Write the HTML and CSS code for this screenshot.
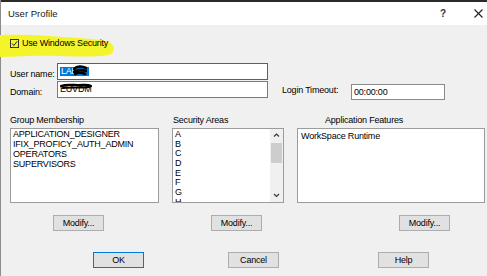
FILE: index.html
```html
<!DOCTYPE html>
<html>
<head>
<meta charset="utf-8">
<link rel="stylesheet" href="styles.css">
</head>
<body>
<div class="window">
  <div class="titlebar">
    <span class="title">User Profile</span>
    <span class="help">?</span>
    <svg class="close" viewBox="0 0 9 9"><path d="M0.5 0.5 L8.5 8.5 M8.5 0.5 L0.5 8.5" stroke="#222" stroke-width="1.1" fill="none"/></svg>
  </div>
  <div class="client">
    <svg class="highlight" viewBox="0 0 114 26"><path d="M0 3 C20 2 60 4 100 8 C112 9 115 14 113 20 C111 25 90 25 60 24 C30 23 10 25 0 25 Z" fill="#f4f42a"/></svg>
    <div class="check-row">
      <svg class="checkbox" viewBox="0 0 9 9"><rect x="0.5" y="0.5" width="8" height="8" fill="none" stroke="#333" stroke-width="1"/><path d="M2 4.5 L3.8 6.5 L7.2 2.3" stroke="#222" stroke-width="1" fill="none"/></svg>
      <span class="check-label">Use Windows Security</span>
    </div>

    <div class="fields">
      <span class="label lbl-user">User name:</span>
      <div class="input focused in-user">
        <span class="selected">LAB</span>
        <svg class="scribble scr-user" viewBox="0 0 14 12"><path d="M1 4 C4 1 9 1 13 3 M1 7 C5 4 10 5 13 6 M2 9 C6 7 10 8 12 9" stroke="#000" stroke-width="2.6" fill="none" stroke-linecap="round"/></svg>
      </div>
      <span class="label lbl-domain">Domain:</span>
      <div class="input in-domain">
        <span class="domain-text">EUVDM</span>
        <svg class="scribble scr-domain" viewBox="0 0 32 7"><path d="M1 3 C6 1 12 2 18 2 C24 2 28 1 31 3 M3 5 C10 4 20 5 29 4" stroke="#000" stroke-width="2.2" fill="none" stroke-linecap="round"/></svg>
      </div>
      <span class="label lbl-timeout">Login Timeout:</span>
      <div class="input timeout">00:00:00</div>
    </div>

    <div class="lists">
      <div class="col">
        <div class="col-label">Group Membership</div>
        <div class="listbox group">
          <div class="item">APPLICATION_DESIGNER</div>
          <div class="item">IFIX_PROFICY_AUTH_ADMIN</div>
          <div class="item">OPERATORS</div>
          <div class="item">SUPERVISORS</div>
        </div>
        <button class="btn modify m1">Modify...</button>
      </div>
      <div class="col">
        <div class="col-label l2">Security Areas</div>
        <div class="listbox areas">
          <div class="area-items">
            <div class="aitem">A</div>
            <div class="aitem">B</div>
            <div class="aitem">C</div>
            <div class="aitem">D</div>
            <div class="aitem">E</div>
            <div class="aitem">F</div>
            <div class="aitem">G</div>
            <div class="aitem">H</div>
          </div>
          <div class="scrollbar">
            <svg class="arrow" viewBox="0 0 13 13"><path d="M4 7.5 L6.5 5 L9 7.5" stroke="#333" stroke-width="1.1" fill="none"/></svg>
            <div class="thumb"></div>
            <div class="track"></div>
            <svg class="arrow" viewBox="0 0 13 13"><path d="M4 5 L6.5 7.5 L9 5" stroke="#333" stroke-width="1.1" fill="none"/></svg>
          </div>
        </div>
        <button class="btn modify m2">Modify...</button>
      </div>
      <div class="col">
        <div class="col-label l3">Application Features</div>
        <div class="listbox features">
          <div class="item">WorkSpace Runtime</div>
        </div>
        <button class="btn modify m3">Modify...</button>
      </div>
    </div>

    <div class="actions">
      <button class="btn ok">OK</button>
      <button class="btn cancel">Cancel</button>
      <button class="btn helpbtn">Help</button>
    </div>
  </div>
</div>
</body>
</html>
```
FILE: styles.css
```css
* { box-sizing: border-box; }
html, body { margin: 0; padding: 0; }
body {
  width: 487px;
  height: 276px;
  overflow: hidden;
  font-family: "Liberation Sans", Arial, sans-serif;
  font-size: 9px;
  letter-spacing: -0.2px;
  color: #000;
  background: #f0f0f0;
}
.window {
  width: 487px;
  height: 276px;
  display: flex;
  flex-direction: column;
  border-left: 1px solid #8c8c8c;
}
.titlebar {
  height: 25px;
  flex: none;
  background: #fff;
  border-top: 2px solid #2b2b2b;
  display: flex;
  align-items: center;
  padding-left: 7px;
}
.title { flex: 1; font-size: 9.5px; color: #1a1a1a; letter-spacing: 0; }
.help { width: 10px; text-align: center; margin-right: 26px; font-size: 10px; font-weight: bold; color: #333; }
.close { width: 9px; height: 9px; margin-right: 4px; }

.client {
  flex: 1;
  position: relative;
  background: #f0f0f0;
  padding: 14px 0 0 9px;
}
.highlight {
  position: absolute;
  left: -1px;
  top: 7px;
  width: 114px;
  height: 26px;
}
.check-row {
  position: relative;
  display: flex;
  align-items: center;
  gap: 3px;
  height: 9px;
}
.checkbox { width: 9px; height: 9px; flex: none; }
.check-label { line-height: 9px; }

.fields {
  margin-top: 15px;
  display: grid;
  grid-template-columns: 47px 211px 83px 94px;
  grid-template-rows: 17px 17px;
  row-gap: 1px;
  height: 35px;
}
.label { line-height: 11px; white-space: nowrap; }
.lbl-user { grid-column: 1; grid-row: 1; align-self: end; }
.lbl-domain { grid-column: 1; grid-row: 2; align-self: end; }
.lbl-timeout { grid-column: 3; grid-row: 2; padding-left: 14px; margin-top: 4px; }
.in-user { grid-column: 2; grid-row: 1; }
.in-domain { grid-column: 2; grid-row: 2; }
.input {
  position: relative;
  background: #fff;
  border: 1px solid #7a7a7a;
  line-height: 15px;
  padding-left: 2px;
  white-space: nowrap;
}
.input.focused { border-color: #0078d7; }
.input.timeout { grid-column: 4; grid-row: 2; margin-top: 3px; height: 16px; line-height: 14px; border-color: #8a8a8a; }
.selected {
  display: inline-block;
  background: #0078d7;
  color: #fff;
  line-height: 9px;
  padding: 0 12px 0 1px;
  vertical-align: middle;
}
.domain-text { display: inline-block; padding-top: 2px; line-height: 11px; vertical-align: top; }
.scribble { position: absolute; }
.scr-user { left: 15px; top: 1px; width: 14px; height: 12px; }
.scr-domain { left: 2px; top: 1px; width: 32px; height: 7px; }

.lists {
  margin-top: 17px;
  display: grid;
  grid-template-columns: 149px 112px 188px;
  column-gap: 13px;
}
.col { display: flex; flex-direction: column; align-items: flex-start; }
.col-label { line-height: 11px; margin-bottom: 2px; white-space: nowrap; }
.col-label.l2 { padding-left: 1px; }
.col-label.l3 { padding-left: 28px; }
.listbox {
  width: 100%;
  height: 75px;
  background: #fff;
  border: 1px solid #9c9c9c;
  overflow: hidden;
}
.group { padding-left: 2px; }
.item { line-height: 10px; white-space: nowrap; }
.features { padding: 2px 0 0 3px; }
.areas { display: flex; }
.area-items { flex: 1; padding-left: 2px; padding-top: 1px; }
.aitem { line-height: 9.7px; height: 9.7px; }
.scrollbar {
  width: 13px;
  flex: none;
  display: flex;
  flex-direction: column;
  background: #f0f0f0;
}
.arrow { width: 13px; height: 13px; flex: none; }
.thumb { height: 20px; margin: 1px 1px 0 1px; background: #cdcdcd; flex: none; }
.track { flex: 1; }

.btn {
  font-family: "Liberation Sans", Arial, sans-serif;
  font-size: 9px;
  letter-spacing: -0.2px;
  color: #000;
  background: #e1e1e1;
  border: 1px solid #adadad;
  width: 51px;
  height: 16px;
  padding: 0;
  line-height: 14px;
  text-align: center;
}
.modify { margin-top: 12px; }
.m1 { margin-left: 43px; }
.m2 { margin-left: 39px; }
.m3 { margin-left: 102px; }

.actions {
  margin-top: 21px;
  display: flex;
  padding-left: 83px;
}
.ok { border-color: #0078d7; }
.cancel { margin-left: 84px; }
.helpbtn { margin-left: 99px; }
```
